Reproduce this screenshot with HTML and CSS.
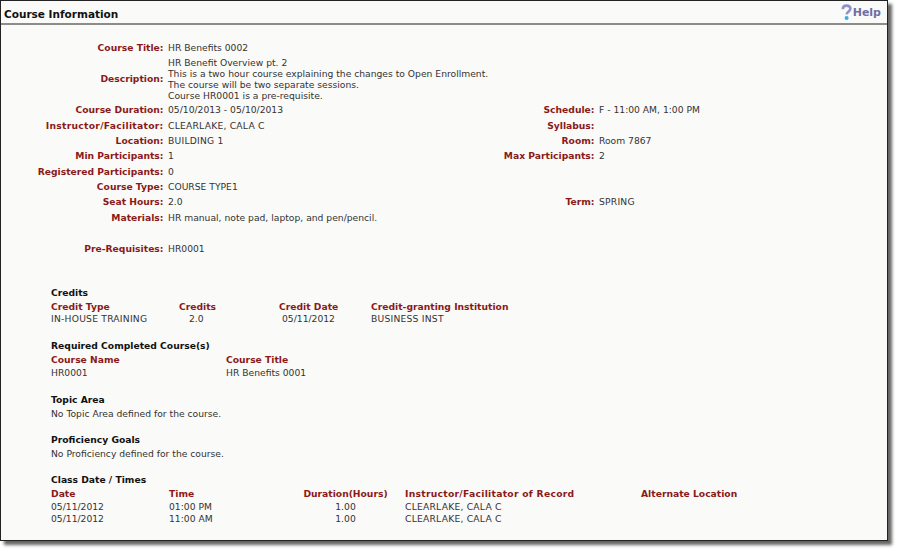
FILE: index.html
```html
<!DOCTYPE html>
<html>
<head>
<meta charset="utf-8">
<title>Course Information</title>
<link rel="stylesheet" href="styles.css">
</head>
<body>
<div class="window">
  <header class="head">
    <h1>Course Information</h1>
    <a class="help"><svg width="11" height="17" viewBox="0 0 11 17"><path d="M1.8 5.2C1.8 2.8 3.4 1.6 5.5 1.6S9.4 2.8 9.4 4.8c0 2.5-3.4 2.9-3.7 5.6" fill="none" stroke="#8f92c4" stroke-width="2.6"/><circle cx="5.6" cy="14" r="2" fill="#35aee8"/></svg>Help</a>
  </header>
  <div class="info">
    <div class="l">Course Title:</div><div class="v wide">HR Benefits 0002</div>
    <div class="l">Description:</div><div class="v wide desc">HR Benefit Overview pt. 2<br>This is a two hour course explaining the changes to Open Enrollment.<br>The course will be two separate sessions.<br>Course HR0001 is a pre-requisite.</div>
    <div class="l">Course Duration:</div><div class="v">05/10/2013 - 05/10/2013</div><div class="l">Schedule:</div><div class="v">F - 11:00 AM, 1:00 PM</div>
    <div class="l sl">Instructor/Facilitator:</div><div class="v caps">CLEARLAKE, CALA C</div><div class="l">Syllabus:</div><div class="v"></div>
    <div class="l">Location:</div><div class="v caps">BUILDING 1</div><div class="l">Room:</div><div class="v">Room 7867</div>
    <div class="l">Min Participants:</div><div class="v">1</div><div class="l">Max Participants:</div><div class="v">2</div>
    <div class="l">Registered Participants:</div><div class="v wide">0</div>
    <div class="l">Course Type:</div><div class="v wide">COURSE TYPE1</div>
    <div class="l">Seat Hours:</div><div class="v">2.0</div><div class="l">Term:</div><div class="v caps">SPRING</div>
    <div class="l">Materials:</div><div class="v wide">HR manual, note pad, laptop, and pen/pencil.</div>
    <div class="l pre">Pre-Requisites:</div><div class="v wide pre">HR0001</div>
  </div>
  <section class="sec first">
    <h2>Credits</h2>
    <div class="tbl credits">
      <b>Credit Type</b><b>Credits</b><b>Credit Date</b><b>Credit-granting Institution</b>
      <span class="caps">IN-HOUSE TRAINING</span><span class="c2">2.0</span><span class="c3">05/11/2012</span><span class="caps">BUSINESS INST</span>
    </div>
  </section>
  <section class="sec">
    <h2>Required Completed Course(s)</h2>
    <div class="tbl req">
      <b>Course Name</b><b>Course Title</b>
      <span>HR0001</span><span>HR Benefits 0001</span>
    </div>
  </section>
  <section class="sec">
    <h2>Topic Area</h2>
    <p>No Topic Area defined for the course.</p>
  </section>
  <section class="sec tight">
    <h2>Proficiency Goals</h2>
    <p>No Proficiency defined for the course.</p>
  </section>
  <section class="sec tight">
    <h2>Class Date / Times</h2>
    <div class="tbl times">
      <b>Date</b><b>Time</b><b class="dur">Duration(Hours)</b><b class="sl">Instructor/Facilitator of Record</b><b>Alternate Location</b>
      <span>05/11/2012</span><span>01:00 PM</span><span class="dur">1.00</span><span class="caps">CLEARLAKE, CALA C</span><span></span>
      <span>05/11/2012</span><span>11:00 AM</span><span class="dur">1.00</span><span class="caps">CLEARLAKE, CALA C</span><span></span>
    </div>
  </section>
</div>
</body>
</html>
```
FILE: styles.css
```css
html, body { margin: 0; padding: 0; background: #fff; }
body { min-height: 553px; font-family: "DejaVu Sans", Verdana, sans-serif; font-size: 9.2px; line-height: 11px; color: #333; }
.window { box-sizing: border-box; width: 888px; height: 541px; background: #fafaf8; border: 1px solid #222; box-shadow: 4px 4px 3px #666; overflow: hidden; }
.head { box-sizing: border-box; height: 24px; border-bottom: 2px solid #8c8c88; display: flex; justify-content: space-between; align-items: center; padding: 5px 6px 0 3px; }
h1 { margin: 0; font-size: 10.5px; font-weight: bold; color: #111; }
.help { display: flex; align-items: center; gap: 1px; font-size: 11px; font-weight: bold; color: #6c70a4; margin-top: -4px; }
.info { display: grid; grid-template-columns: 162.5px 330px 92px 1fr; column-gap: 4.5px; margin-top: 15px; grid-auto-rows: minmax(15.3px, auto); align-items: center; }
.l { font-weight: bold; color: #8a1a1a; text-align: right; white-space: nowrap; }
.v { white-space: nowrap; }
.wide { grid-column: 2 / 5; }
.desc { padding: 1.5px 0; }
.pre { margin-top: 18px; }
.sec { margin: 16.4px 0 0 50px; }
.sec.first { margin-top: 33px; }
.sec.tight { margin-top: 15px; }
h2 { margin: 0 0 3px; font-size: 9.2px; line-height: 11px; font-weight: bold; color: #111; }
p { margin: 0; }
.tbl { display: grid; row-gap: 1.4px; }
.tbl b { color: #8a1a1a; }
.sl { letter-spacing: .28px; }
.caps { letter-spacing: .22px; }
.credits { grid-template-columns: 128px 100px 92px auto; }
.c2 { padding-left: 10px; }
.c3 { padding-left: 3px; }
.req { grid-template-columns: 175px auto; }
.times { grid-template-columns: 118px 117px 119px 236px auto; }
.dur { text-align: center; }
```
